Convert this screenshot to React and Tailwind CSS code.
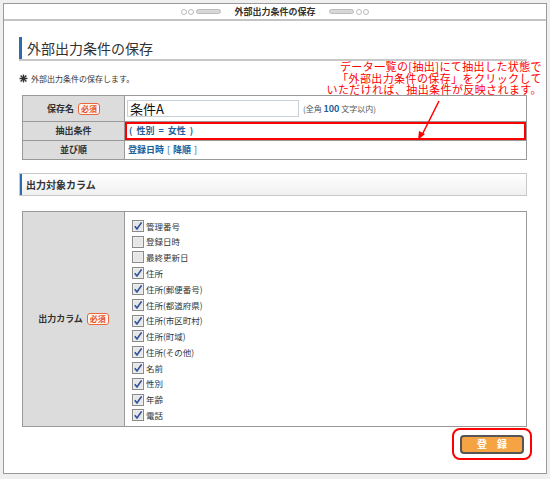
import React from 'react';

const font = { fontFamily: '"Noto Sans CJK JP", "Noto Sans", sans-serif' };

function Badge() {
  return (
    <span className="ml-[4px] inline-flex h-[12px] w-[22px] items-center justify-center rounded-[3px] border border-[#e8683c] bg-[#fff6f0] text-[8px] leading-none text-[#e8502a]">
      必須
    </span>
  );
}

function Checkbox({ checked }) {
  return (
    <svg width="12" height="12" viewBox="0 0 12 12" className="shrink-0">
      <rect x="0.5" y="0.5" width="11" height="11" fill="#f4f4f4" stroke="#8a8a8a" />
      <rect x="1.5" y="1.5" width="9" height="9" fill="#e6e6e6" />
      {checked && <path d="M2.8 6.2 L5 9 L9.6 2.4" fill="none" stroke="#2b4fa0" strokeWidth="1.6" />}
    </svg>
  );
}

function Deco({ flip }) {
  const dots = (
    <div className="flex gap-[1px]">
      <span className="h-[6px] w-[6px] rounded-full border border-[#bbb] bg-white" />
      <span className="h-[6px] w-[6px] rounded-full border border-[#bbb] bg-white" />
    </div>
  );
  const pill = <span className="h-[5px] w-[25px] rounded-full border border-[#bbb] bg-[#d8d8d8]" />;
  return (
    <div className="flex items-center gap-[2px]">
      {flip ? pill : dots}
      {flip ? dots : pill}
    </div>
  );
}

function Star() {
  return (
    <svg width="9" height="9" viewBox="0 0 9 9" className="mr-[3px]">
      <g stroke="#333" strokeWidth="1.4">
        <line x1="4.5" y1="0.5" x2="4.5" y2="8.5" />
        <line x1="0.5" y1="4.5" x2="8.5" y2="4.5" />
        <line x1="1.6" y1="1.6" x2="7.4" y2="7.4" />
        <line x1="7.4" y1="1.6" x2="1.6" y2="7.4" />
      </g>
    </svg>
  );
}

const columns = [
  ['管理番号', true],
  ['登録日時', false],
  ['最終更新日', false],
  ['住所', true],
  ['住所(郵便番号)', true],
  ['住所(都道府県)', true],
  ['住所(市区町村)', true],
  ['住所(町域)', true],
  ['住所(その他)', true],
  ['名前', true],
  ['性別', true],
  ['年齢', true],
  ['電話', true],
];

export default function App() {
  return (
    <div className="h-[479px] w-[550px] bg-[#efefef] pl-[3px] pr-[3px] pt-[3px]" style={font}>
      <div className="relative flex h-[471px] flex-col border border-[#9a9a9a] bg-white">
        {/* title bar */}
        <div className="flex h-[17px] items-center justify-center gap-[13px] border-b-2 border-[#c4c4c4]">
          <Deco />
          <span className="text-[9px] font-bold leading-none text-[#333]">外部出力条件の保存</span>
          <Deco flip />
        </div>

        <div className="relative flex flex-col pl-[15px] pr-[19px]">
          {/* heading */}
          <div className="mt-[16px] flex h-[24px] items-center border-b-2 border-[#c8c8c8]">
            <span className="mr-[5px] h-full w-[3px] bg-[#2a6cb0]" />
            <span className="text-[14px] leading-none text-[#333]">外部出力条件の保存</span>
          </div>

          {/* annotation */}
          <div className="absolute right-[4px] top-[40px] text-right text-[11px] leading-[11.5px] tracking-[0.4px] text-[#ff0000]">
            <div>データ一覧の[抽出]にて抽出した状態で</div>
            <div>「外部出力条件の保存」をクリックして</div>
            <div>いただければ、抽出条件が反映されます。</div>
          </div>

          <div className="mt-[13px] flex items-center text-[8px] leading-none text-[#333]">
            <Star />
            外部出力条件の保存します。
          </div>

          {/* table 1 */}
          <div className="ml-[3px] mt-[12px] flex flex-col border border-[#999] text-[9px]">
            <div className="flex h-[26px] border-b border-[#999]">
              <div className="flex w-[102px] shrink-0 items-center justify-center border-r border-[#999] bg-[#dcdcdc] font-bold text-[#333]">
                保存名<Badge />
              </div>
              <div className="flex items-center pl-[2px]">
                <div className="flex h-[17px] w-[172px] items-center border border-[#c8d0d8] px-[2px] text-[13px] leading-none text-[#111]">
                  条件A
                </div>
                <span className="ml-[4px] text-[8px] text-[#555]">
                  (全角 <b className="text-[9px] text-[#1c5f9c]">100</b> 文字以内)
                </span>
              </div>
            </div>
            <div className="flex h-[19px] border-b border-[#999]">
              <div className="flex w-[102px] shrink-0 items-center justify-center border-r border-[#999] bg-[#dcdcdc] font-bold text-[#333]">
                抽出条件
              </div>
              <div className="flex flex-1 items-center gap-[4px] border-2 border-[#ff0000] pl-[2px] font-bold text-[#1c5f9c]">
                <span>(</span>
                <span>性別</span>
                <span>=</span>
                <span>女性</span>
                <span>)</span>
              </div>
            </div>
            <div className="flex h-[18px]">
              <div className="flex w-[102px] shrink-0 items-center justify-center border-r border-[#999] bg-[#dcdcdc] font-bold text-[#333]">
                並び順
              </div>
              <div className="flex items-center pl-[3px] font-bold text-[#1c5f9c]">
                登録日時 <span className="mx-[3px] font-normal">[</span>降順<span className="ml-[3px] font-normal">]</span>
              </div>
            </div>
          </div>

          {/* arrow */}
          <svg className="absolute left-[410px] top-[78px]" width="30" height="42" viewBox="0 0 30 42">
            <line x1="25" y1="2" x2="8" y2="36" stroke="#ff0000" strokeWidth="1.5" />
            <path d="M4 41 L5 32 L11 35 Z" fill="#ff0000" />
          </svg>

          {/* section header */}
          <div className="mt-[13px] flex h-[23px] items-center border border-[#c8c8c8] bg-gradient-to-b from-white to-[#f0f0f0]">
            <span className="mr-[4px] h-full w-[2px] bg-[#2a6cb0]" />
            <span className="text-[10px] font-bold text-[#333]">出力対象カラム</span>
          </div>

          {/* table 2 */}
          <div className="ml-[3px] mt-[15px] flex h-[216px] border border-[#999] text-[9px]">
            <div className="flex w-[102px] shrink-0 items-center justify-center border-r border-[#999] bg-[#dcdcdc] font-bold text-[#333]">
              出力カラム<Badge />
            </div>
            <div className="flex flex-col pl-[7px] pt-[6px]">
              {columns.map(([name, checked]) => (
                <div key={name} className="flex h-[15.8px] items-center gap-[2px] text-[8.5px] text-[#333]">
                  <Checkbox checked={checked} />
                  <span>{name}</span>
                </div>
              ))}
            </div>
          </div>

          {/* button */}
          <div className="mt-[1px] flex justify-end">
            <div className="mr-[-5px] flex h-[32px] w-[80px] items-center justify-center rounded-[8px] border-2 border-[#ff0000]">
              <div className="flex h-[19px] w-[64px] items-center justify-center rounded-[4px] border-2 border-[#555] bg-[#f6a443] text-[10px] font-bold leading-none text-white">
                登　録
              </div>
            </div>
          </div>
        </div>
      </div>
    </div>
  );
}
